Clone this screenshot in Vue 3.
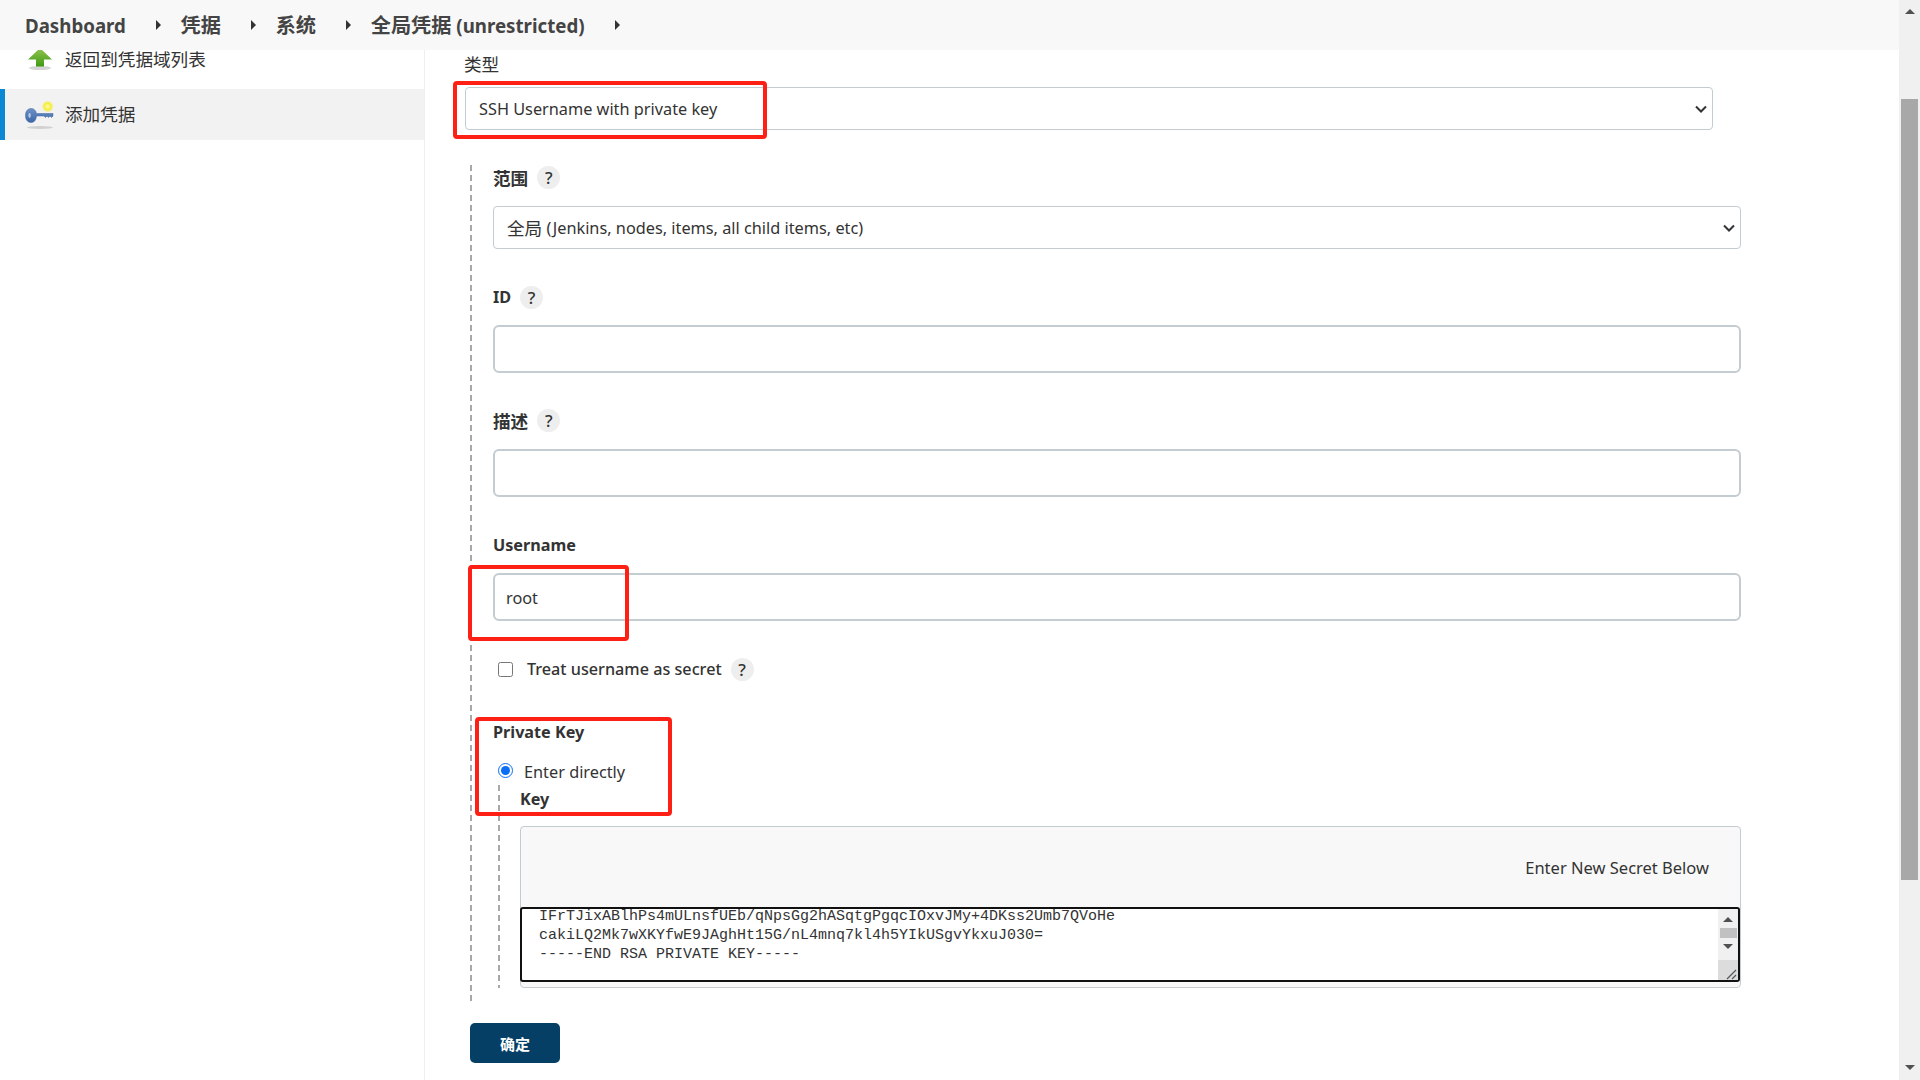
<script setup>
const lines = [
  'IFrTJixABlhPs4mULnsfUEb/qNpsGg2hASqtgPgqcIOxvJMy+4DKss2Umb7QVoHe',
  'cakiLQ2Mk7wXKYfwE9JAghHt15G/nL4mnq7kl4h5YIkUSgvYkxuJ030=',
  '-----END RSA PRIVATE KEY-----'
]
const crumbs = [
  { cjk: '', latin: 'Dashboard' },
  { cjk: '凭据', latin: '' },
  { cjk: '系统', latin: '' },
  { cjk: '全局凭据', latin: ' (unrestricted)' }
]
</script>

<template>
  <div class="screen">
    <div class="page">
      <header class="crumbs">
        <template v-for="c in crumbs" :key="c.cjk + c.latin">
          <span class="crumb"><span class="cjk">{{ c.cjk }}</span>{{ c.latin }}</span>
          <span class="caret"></span>
        </template>
      </header>
      <div class="body">
        <aside class="side">
          <div class="nav">
            <a class="item">
              <svg width="28" height="24" viewBox="0 0 28 24">
                <defs>
                  <linearGradient id="ga" x1="0" y1="0" x2="0" y2="1">
                    <stop offset="0" stop-color="#94c455" />
                    <stop offset="1" stop-color="#3f9a12" />
                  </linearGradient>
                </defs>
                <ellipse cx="14" cy="21" rx="11" ry="2" fill="#d4d4d4" />
                <path d="M14 1 L26 12.5 H18 V19.5 H10 V12.5 H2 Z" fill="url(#ga)" />
              </svg>
              <span class="nav-text">返回到凭据域列表</span>
            </a>
            <a class="item active">
              <svg width="32" height="28" viewBox="0 0 32 28">
                <defs>
                  <radialGradient id="gk">
                    <stop offset="0" stop-color="#fffbb0" />
                    <stop offset=".6" stop-color="#f6ec3c" />
                    <stop offset="1" stop-color="#f6ec3c" stop-opacity="0" />
                  </radialGradient>
                  <linearGradient id="gb" x1="0" y1="0" x2="0" y2="1">
                    <stop offset="0" stop-color="#6d93c8" />
                    <stop offset="1" stop-color="#3c66a6" />
                  </linearGradient>
                </defs>
                <ellipse cx="15" cy="26.5" rx="13" ry="1.5" fill="#d0d0d0" />
                <circle cx="22.7" cy="5.5" r="6" fill="url(#gk)" />
                <path d="M6 7.5 C9 7.5 11 9.5 11.5 12.5 H28 V15 L26.5 16.5 25 15 23.5 16.5 22 15 20.5 16.5 19 15 H11.5 C11 19.5 9 21.5 6 21.5 C2.5 21.5 .5 18.5 .5 14.5 C.5 10.5 2.5 7.5 6 7.5 Z" fill="url(#gb)" stroke="#3f659f" stroke-width=".5" />
                <ellipse cx="4.6" cy="14.5" rx="1.2" ry="2.4" fill="#b8c9e2" />
              </svg>
              <span class="nav-text">添加凭据</span>
            </a>
          </div>
        </aside>
        <main class="content">
          <div class="kind-label"><span class="cjk">类型</span></div>
          <div class="select-wrap outer">
            <div class="control select">SSH Username with private key</div>
            <svg class="chev" width="14" height="10" viewBox="0 0 14 10"><path d="M2 2.5 L7 7.5 L12 2.5" fill="none" stroke="#333" stroke-width="2" /></svg>
          </div>
          <div class="form">
            <section class="field">
              <div class="label zh"><span class="cjk">范围</span><span class="help">?</span></div>
              <div class="select-wrap">
                <div class="control select"><span class="cjk">全局</span>&nbsp;(Jenkins, nodes, items, all child items, etc)</div>
                <svg class="chev" width="14" height="10" viewBox="0 0 14 10"><path d="M2 2.5 L7 7.5 L12 2.5" fill="none" stroke="#333" stroke-width="2" /></svg>
              </div>
            </section>
            <section class="field">
              <div class="label">ID<span class="help">?</span></div>
              <input class="control input" />
            </section>
            <section class="field">
              <div class="label zh"><span class="cjk">描述</span><span class="help">?</span></div>
              <input class="control input" />
            </section>
            <section class="field">
              <div class="label">Username</div>
              <input class="control input" value="root" />
            </section>
            <section class="field check-row">
              <input class="check" type="checkbox" />
              <span>Treat username as secret</span>
              <span class="help">?</span>
            </section>
            <section class="key-field">
              <div class="label">Private Key</div>
              <label class="radio-row">
                <input class="radio" type="radio" checked />
                <span>Enter directly</span>
              </label>
              <div class="nested">
                <div class="label key-label">Key</div>
                <div class="secret">
                  <div class="secret-head">Enter New Secret Below</div>
                  <div class="area">
                    <pre class="area-text">{{ lines.join('\n') }}</pre>
                    <div class="mini-bar">
                      <i class="arrow up"></i>
                      <i class="mini-thumb"></i>
                      <i class="arrow down"></i>
                    </div>
                    <div class="grip">
                      <svg width="20" height="20" viewBox="0 0 20 20"><path d="M9 19 L18 10 M14 19 L18 15" stroke="#555" stroke-width="1.2" fill="none" /></svg>
                    </div>
                  </div>
                </div>
              </div>
            </section>
          </div>
          <button class="ok">确定</button>
        </main>
      </div>
    </div>
    <div class="scrollbar">
      <i class="arrow up top"></i>
      <i class="thumb"></i>
      <i class="arrow down bottom"></i>
    </div>
    <div class="mark m1"></div>
    <div class="mark m2"></div>
    <div class="mark m3"></div>
  </div>
</template>

<style>
html, body { margin: 0; background: #fff; overflow: hidden; }
</style>

<style scoped>
* { box-sizing: border-box; }
.screen {
  position: relative;
  width: 1920px;
  height: 1080px;
  display: flex;
  overflow: hidden;
  background: #fff;
  color: #333;
  font-family: "Noto Sans", "Noto Sans CJK SC", sans-serif;
  font-size: 16.3px;
}
.cjk { font-size: 17.6px; font-family: "Noto Sans CJK SC", sans-serif; }
.page { flex: 1; min-width: 0; display: flex; flex-direction: column; }
.crumbs {
  position: relative;
  z-index: 2;
  height: 50px;
  flex: none;
  background: #f8f8f8;
  display: flex;
  align-items: center;
  padding: 0 0 2px 25px;
  font-weight: 700;
  font-size: 18.7px;
  color: #444;
}
.crumbs .cjk { font-size: 20.2px; }
.caret {
  width: 0;
  height: 0;
  margin: 2px 19.7px 0 30px;
  border-left: 5px solid #333;
  border-top: 5px solid transparent;
  border-bottom: 5px solid transparent;
}
.body { flex: 1; display: flex; min-height: 0; }
.side { width: 425px; flex: none; border-right: 1px solid #efefef; }
.nav { margin-top: -16px; display: flex; flex-direction: column; gap: 4px; }
.item {
  height: 51px;
  display: flex;
  align-items: center;
  gap: 11px;
  padding-left: 26px;
  padding-bottom: 2px;
  color: #333;
}
.nav-text { font-size: 17.6px; line-height: 17px; font-family: "Noto Sans CJK SC", sans-serif; }
.item svg { flex: none; }
.item.active { background: #f2f2f2; border-left: 5px solid #0b87d3; padding-left: 20px; gap: 8px; }
.item.active svg { margin-top: 2px; }
.content { flex: 1; padding: 2px 0 0 40px; min-width: 0; }
.kind-label { height: 24px; margin-bottom: 11px; line-height: 24px; margin-left: -1px; }
.select-wrap { position: relative; }
.select-wrap.outer { width: 1248px; }
.control {
  display: block;
  width: 100%;
  border: 1px solid #c3ccd1;
  border-radius: 4px;
  background: #fff;
  color: #333;
  font: inherit;
  outline: none;
}
.select { height: 43px; padding: 0 13px; display: flex; align-items: center; white-space: pre; }
.input { height: 48px; padding: 2px 11px 0; border-width: 2px; border-radius: 6px; }
.chev { position: absolute; right: 5px; top: 17px; }
.form {
  width: 1271px;
  margin: 35px 0 0 5px;
  padding: 0 0 17px 23px;
  background: repeating-linear-gradient(#a8a8a8 0 6px, transparent 6px 10px) left top / 2px 100% no-repeat;
}
.field { margin-bottom: 35px; }
.label {
  height: 26px;
  margin-bottom: 15px;
  display: flex;
  align-items: center;
  gap: 9px;
  font-weight: 700;
  font-size: 16.2px;
}
.label.zh { padding-bottom: 2px; }
.help {
  width: 23px;
  height: 23px;
  border-radius: 50%;
  background: #eee;
  display: inline-flex;
  align-items: center;
  justify-content: center;
  font-weight: 500;
  font-size: 17px;
  color: #333;
}
.check-row {
  height: 26px;
  display: flex;
  align-items: center;
  padding-bottom: 2px;
  font-weight: 500;
  font-size: 16.2px;
  margin-top: 36px;
  margin-bottom: 36px;
}
.check { width: 15px; height: 15px; margin: 0 14px 0 5px; }
.check-row .help { margin-left: 9px; }
.radio-row { height: 24px; display: flex; align-items: center; }
.radio { width: 15px; height: 15px; margin: -3px 11px 0 5px; accent-color: #0b6ef5; }
.nested {
  margin: 1px 0 0 5px;
  padding: 2px 0 0 22px;
  background: repeating-linear-gradient(#a8a8a8 0 6px, transparent 6px 10px) left top / 2px 100% no-repeat;
}
.key-label { height: 24px; }
.secret {
  height: 162px;
  width: 1221px;
  border: 1px solid #c3ccd1;
  border-radius: 4px;
  background: #f8f8f8;
}
.secret-head {
  height: 80px;
  line-height: 82px;
  padding-right: 31px;
  text-align: right;
  font-size: 16.5px;
}
.area {
  position: relative;
  height: 75px;
  margin: 0 0 0 -1px;
  border: 2px solid #111;
  border-radius: 3px;
  background: #fff;
  overflow: hidden;
}
.area-text {
  margin: -2px 0 0 17px;
  font-family: "Liberation Mono", monospace;
  font-size: 15px;
  line-height: 19px;
  color: #333;
}
.mini-bar {
  position: absolute;
  top: 0;
  right: 0;
  bottom: 20px;
  width: 20px;
  background: #f0f0f0;
  display: flex;
  flex-direction: column;
  align-items: center;
}
.mini-bar .up { margin-top: 8px; }
.mini-thumb { width: 17px; height: 10px; margin: 6px 0; background: #c1c1c1; }
.grip { position: absolute; right: 0; bottom: 0; width: 20px; height: 20px; background: #dcdcdc; }
.arrow { display: block; width: 0; height: 0; border-left: 5px solid transparent; border-right: 5px solid transparent; flex: none; }
.arrow.up { border-bottom: 5px solid #505050; }
.arrow.down { border-top: 5px solid #505050; }
.ok {
  display: block;
  width: 90px;
  height: 40px;
  margin: 18px 0 0 5px;
  border: 0;
  border-radius: 5px;
  background: #053f66;
  color: #fff;
  font: 700 15px "Noto Sans CJK SC", sans-serif;
}
.scrollbar {
  width: 21px;
  flex: none;
  background: #f0f0f0;
  display: flex;
  flex-direction: column;
  align-items: center;
}
.scrollbar .top { margin-top: 9px; }
.thumb { width: 17px; height: 781px; margin-top: 85px; background: #a8a8a8; }
.scrollbar .bottom { margin-top: 185px; }
.mark { position: absolute; z-index: 3; border: 4px solid #ff2015; border-radius: 4px; pointer-events: none; }
.m1 { left: 453px; top: 81px; width: 314px; height: 58px; }
.m2 { left: 468px; top: 565px; width: 161px; height: 76px; }
.m3 { left: 475px; top: 717px; width: 197px; height: 99px; }
</style>
